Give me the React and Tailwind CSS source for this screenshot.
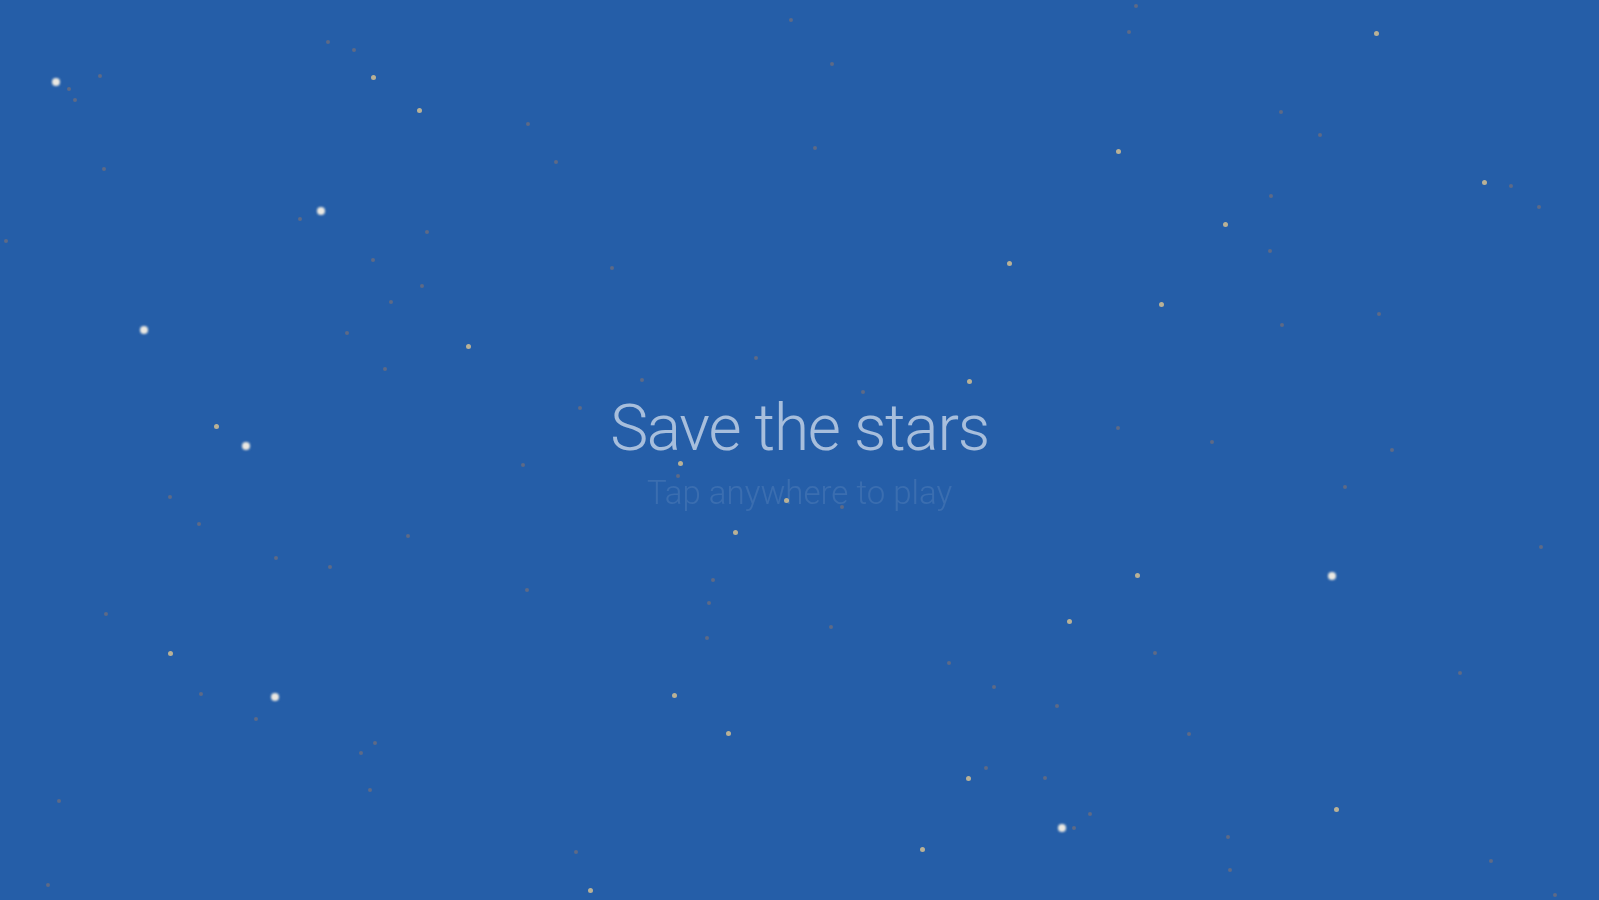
import React from 'react';

// [x, y, kind]  kind: b = bright, t = tan, d = dim
const STARS = [
    [56, 82, 'b'], [321, 211, 'b'], [144, 330, 'b'], [246, 446, 'b'], [275, 697, 'b'],
    [1332, 576, 'b'], [1062, 828, 'b'],
    [373, 77, 't'], [419, 110, 't'], [468, 346, 't'], [216, 426, 't'], [1376, 33, 't'],
    [1118, 151, 't'], [1484, 182, 't'], [1225, 224, 't'], [1009, 263, 't'], [1161, 304, 't'],
    [969, 381, 't'], [680, 463, 't'], [786, 500, 't'], [735, 532, 't'], [170, 653, 't'],
    [674, 695, 't'], [728, 733, 't'], [590, 890, 't'], [1137, 575, 't'], [1069, 621, 't'],
    [968, 778, 't'], [1336, 809, 't'], [922, 849, 't'],
    [100, 76, 'd'], [69, 89, 'd'], [75, 100, 'd'], [328, 42, 'd'], [354, 50, 'd'],
    [528, 124, 'd'], [556, 162, 'd'], [104, 169, 'd'], [300, 219, 'd'], [6, 241, 'd'],
    [427, 232, 'd'], [373, 260, 'd'], [612, 268, 'd'], [422, 286, 'd'], [391, 302, 'd'],
    [347, 333, 'd'], [385, 369, 'd'], [756, 358, 'd'], [642, 380, 'd'], [580, 408, 'd'],
    [791, 20, 'd'], [1136, 6, 'd'], [1129, 32, 'd'], [832, 64, 'd'], [1281, 112, 'd'],
    [1320, 135, 'd'], [815, 148, 'd'], [1511, 186, 'd'], [1539, 207, 'd'], [1271, 196, 'd'],
    [1270, 251, 'd'], [1379, 314, 'd'], [1282, 325, 'd'], [863, 392, 'd'], [1118, 428, 'd'],
    [1212, 442, 'd'], [1392, 450, 'd'], [523, 465, 'd'], [678, 476, 'd'], [170, 497, 'd'],
    [199, 524, 'd'], [408, 536, 'd'], [276, 558, 'd'], [330, 567, 'd'], [527, 590, 'd'],
    [713, 580, 'd'], [709, 603, 'd'], [106, 614, 'd'], [707, 638, 'd'], [201, 694, 'd'],
    [256, 719, 'd'], [375, 743, 'd'], [361, 753, 'd'], [370, 790, 'd'], [59, 801, 'd'],
    [576, 852, 'd'], [48, 885, 'd'], [842, 507, 'd'], [1345, 487, 'd'], [1541, 547, 'd'],
    [831, 627, 'd'], [1155, 653, 'd'], [949, 663, 'd'], [1460, 673, 'd'], [994, 687, 'd'],
    [1057, 706, 'd'], [1189, 734, 'd'], [986, 768, 'd'], [1045, 778, 'd'], [1090, 814, 'd'],
    [1074, 828, 'd'], [1228, 837, 'd'], [1491, 861, 'd'], [1230, 870, 'd'], [1555, 895, 'd'],
];

const KIND = {
    b: 'h-[8px] w-[8px] -ml-[4px] -mt-[4px] bg-[#ebe8e1] blur-[0.8px]',
    t: 'h-[5px] w-[5px] -ml-[2.5px] -mt-[2.5px] bg-[#b9b196] blur-[0.6px]',
    d: 'h-[4px] w-[4px] -ml-[2px] -mt-[2px] bg-[#5d6a87] blur-[0.6px]',
};

function Star({ x, y, kind }) {
    return (
        <span
            className={`absolute rounded-full ${KIND[kind]}`}
            style={{ left: x, top: y }}
        />
    );
}

export default function App() {
    return (
        <div className="relative h-screen w-full overflow-hidden bg-[#255ea8] font-['Roboto','Liberation_Sans',sans-serif]">
            {/* Star field */}
            <div className="absolute inset-0">
                {STARS.map(([x, y, kind], i) => (
                    <Star key={i} x={x} y={y} kind={kind} />
                ))}
            </div>

            {/* Title */}
            <div className="relative flex h-full flex-col items-center justify-center pt-[6px] blur-[0.5px]">
                <h1 className="text-[64px] font-light leading-[72px] tracking-[-0.02em] text-white/60">
                    Save the stars
                </h1>
                <p className="mt-[8px] text-[33px] font-light leading-[40px] text-white/[0.1]">
                    Tap anywhere to play
                </p>
            </div>
        </div>
    );
}
